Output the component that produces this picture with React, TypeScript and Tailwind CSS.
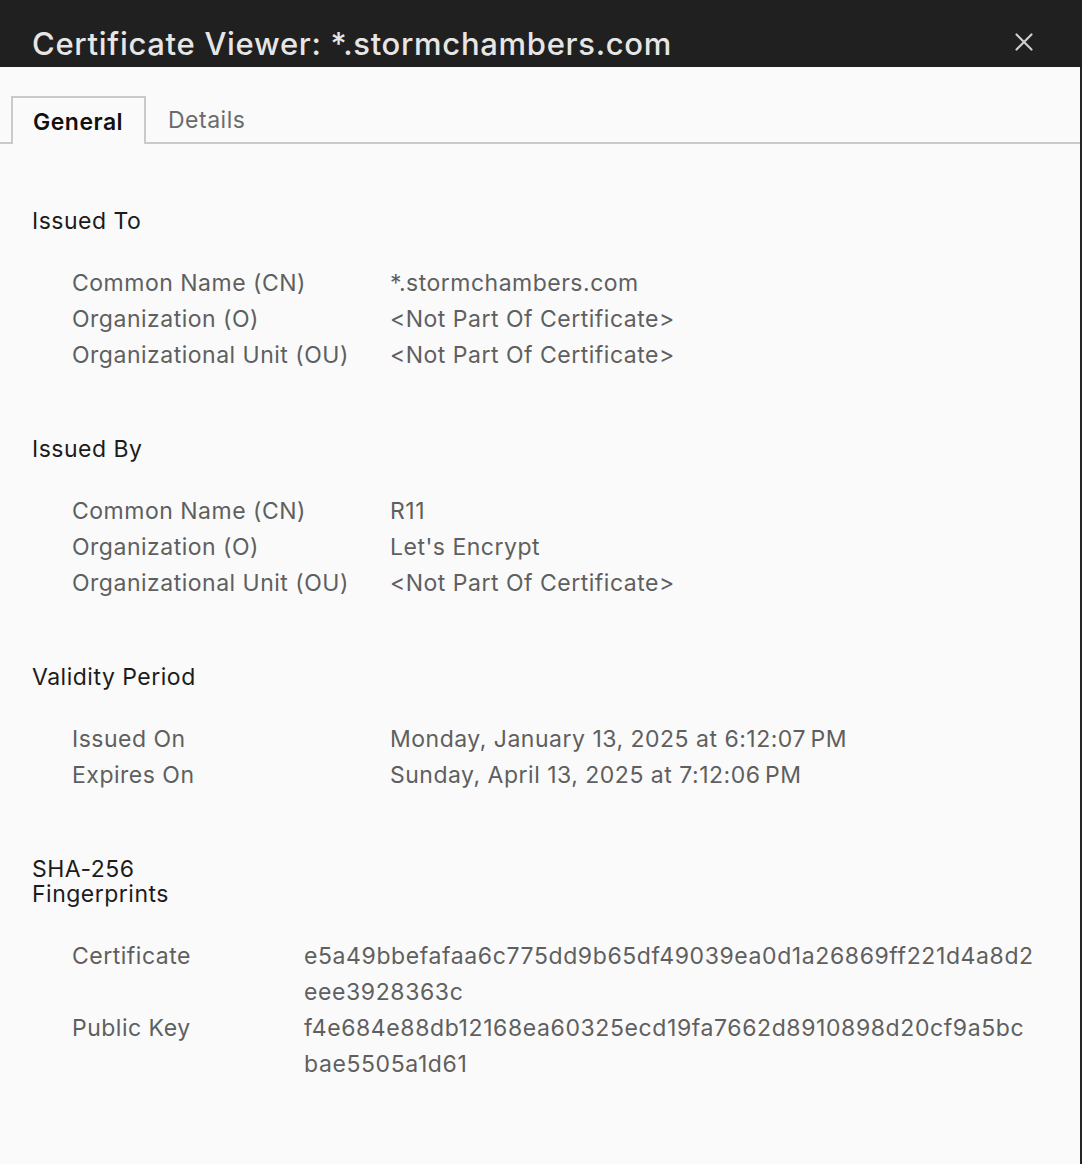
import { X } from 'lucide-react';

type Row = { label: string; value: string | string[] };

interface SectionProps {
  title: string;
  rows: Row[];
  labelWidth: string;
  titleClass?: string;
  valueClass?: string;
}

const issuedTo: Row[] = [
  { label: 'Common Name (CN)', value: '*.stormchambers.com' },
  { label: 'Organization (O)', value: '<Not Part Of Certificate>' },
  { label: 'Organizational Unit (OU)', value: '<Not Part Of Certificate>' },
];

const issuedBy: Row[] = [
  { label: 'Common Name (CN)', value: 'R11' },
  { label: 'Organization (O)', value: "Let's Encrypt" },
  { label: 'Organizational Unit (OU)', value: '<Not Part Of Certificate>' },
];

const validity: Row[] = [
  { label: 'Issued On', value: 'Monday, January 13, 2025 at 6:12:07\u202FPM' },
  { label: 'Expires On', value: 'Sunday, April 13, 2025 at 7:12:06\u202FPM' },
];

// hashes are split where the dialog wraps them
const fingerprints: Row[] = [
  { label: 'Certificate', value: ['e5a49bbefafaa6c775dd9b65df49039ea0d1a26869ff221d4a8d2', 'eee3928363c'] },
  { label: 'Public Key', value: ['f4e684e88db12168ea60325ecd19fa7662d8910898d20cf9a5bc', 'bae5505a1d61'] },
];

function Section({ title, rows, labelWidth, titleClass = '', valueClass = 'tracking-[0.5px]' }: SectionProps) {
  return (
    <section>
      <h2 className={`pt-[2px] text-[23px] leading-[25px] tracking-[0.5px] text-[#1c1c1c] ${titleClass}`}>{title}</h2>
      <div className="mt-[31px] pl-10">
        {rows.map((row) => (
          <div key={row.label} className="flex text-[23px] leading-[36px] text-[#5f5f5f]">
            <div className={`${labelWidth} shrink-0 tracking-[0.5px]`}>{row.label}</div>
            <div className={valueClass}>
              {Array.isArray(row.value)
                ? row.value.map((line) => <div key={line}>{line}</div>)
                : row.value}
            </div>
          </div>
        ))}
      </div>
    </section>
  );
}

export default function App() {
  return (
    <div className="w-[1082px] h-[1164px] bg-[#fafafa] flex flex-col overflow-hidden" style={{ fontFamily: 'Inter, "Noto Sans", sans-serif' }}>
      {/* Title bar */}
      <header className="h-[67px] shrink-0 bg-[#202020] flex items-center justify-between pl-8 pr-[46px] pt-[21px]">
        <h1 className="text-[31px] font-medium text-[#e6e6e6] tracking-[0.7px]">
          Certificate Viewer: *.stormchambers.com
        </h1>
        <X className="w-[30px] h-[30px] text-[#cfcfcf] -mr-[3px] -mt-[4px]" strokeWidth={1.7} />
      </header>

      <div className="flex-1 border-r-2 border-[#242424]">
        {/* Tabs */}
        <div className="mt-[29px] flex items-end border-b-2 border-[#cacaca] h-[48px]">
          <div className="ml-[11px] h-[48px] -mb-[2px] w-[135px] pl-[20px] pt-[2px] flex items-center border-2 border-b-0 border-[#cacaca] bg-[#fafafa] text-[23px] font-semibold tracking-[0.5px] text-[#111]">
            General
          </div>
          <div className="h-[48px] pl-[22px] pt-[4px] flex items-center text-[23px] tracking-[0.5px] text-[#6b6b6b]">
            Details
          </div>
        </div>

        {/* Content */}
        <main className="pl-8 pt-[63px] flex flex-col gap-[62px]">
          <Section title="Issued To" rows={issuedTo} labelWidth="w-[318px]" />
          <Section title="Issued By" rows={issuedBy} labelWidth="w-[318px]" />
          <Section title="Validity Period" rows={validity} labelWidth="w-[318px]" />
          <Section
            title="SHA-256 Fingerprints"
            rows={fingerprints}
            labelWidth="w-[232px]"
            titleClass="w-[150px]"
            valueClass="tracking-[0.6px]"
          />
        </main>
      </div>
    </div>
  );
}
